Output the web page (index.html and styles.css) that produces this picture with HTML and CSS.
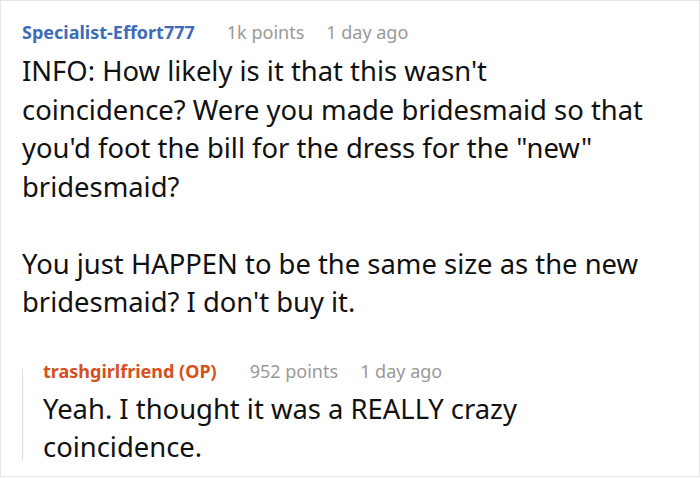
FILE: index.html
```html
<!DOCTYPE html>
<html>
<head>
<meta charset="utf-8">
<link rel="stylesheet" href="styles.css">
</head>
<body>
<div class="card">
  <div class="comment">
    <div class="meta">
      <span class="author">Specialist-Effort777</span>
      <span class="info">1k points</span>
      <span class="info">1 day ago</span>
    </div>
    <div class="body">
      <p>INFO: How likely is it that this wasn't coincidence? Were you made bridesmaid so that you'd foot the bill for the dress for the "new" bridesmaid?</p>
      <p>You just HAPPEN to be the same size as the new bridesmaid? I don't buy it.</p>
    </div>
    <div class="reply">
      <div class="meta">
        <span class="author op">trashgirlfriend (OP)</span>
        <span class="info">952 points</span>
        <span class="info">1 day ago</span>
      </div>
      <div class="body">
        <p>Yeah. I thought it was a REALLY crazy coincidence.</p>
      </div>
    </div>
  </div>
</div>
</body>
</html>
```
FILE: styles.css
```css
html, body {
  margin: 0;
  padding: 0;
  background: #fff;
}
body {
  font-family: "Noto Sans", sans-serif;
  color: #111;
}
.card {
  box-sizing: border-box;
  width: 700px;
  height: 477px;
  border: 1px solid #e6e6e6;
  overflow: hidden;
}
.comment {
  padding: 14px 43px 0 21px;
}
.meta {
  display: flex;
  gap: 22px;
  font-size: 18px;
  line-height: 34px;
  white-space: nowrap;
}
.author {
  font-weight: bold;
  color: #3d6cb9;
  margin-right: 10px;
}
.author.op {
  color: #d6501c;
  margin-right: 11px;
}
.info {
  color: #999;
}
.body {
  margin-top: 3px;
  font-size: 27.4px;
  line-height: 38.5px;
}
.body p {
  margin: 0 0 38.5px 0;
}
.body p:last-child {
  margin-bottom: 0;
}
.reply {
  display: flow-root;
  margin-top: 47px;
  border-left: 1px solid #ddd;
  padding-left: 20px;
}
.reply .meta {
  margin-top: -15px;
}
.reply .body {
  margin-top: 2px;
  margin-bottom: -7px;
}
```
